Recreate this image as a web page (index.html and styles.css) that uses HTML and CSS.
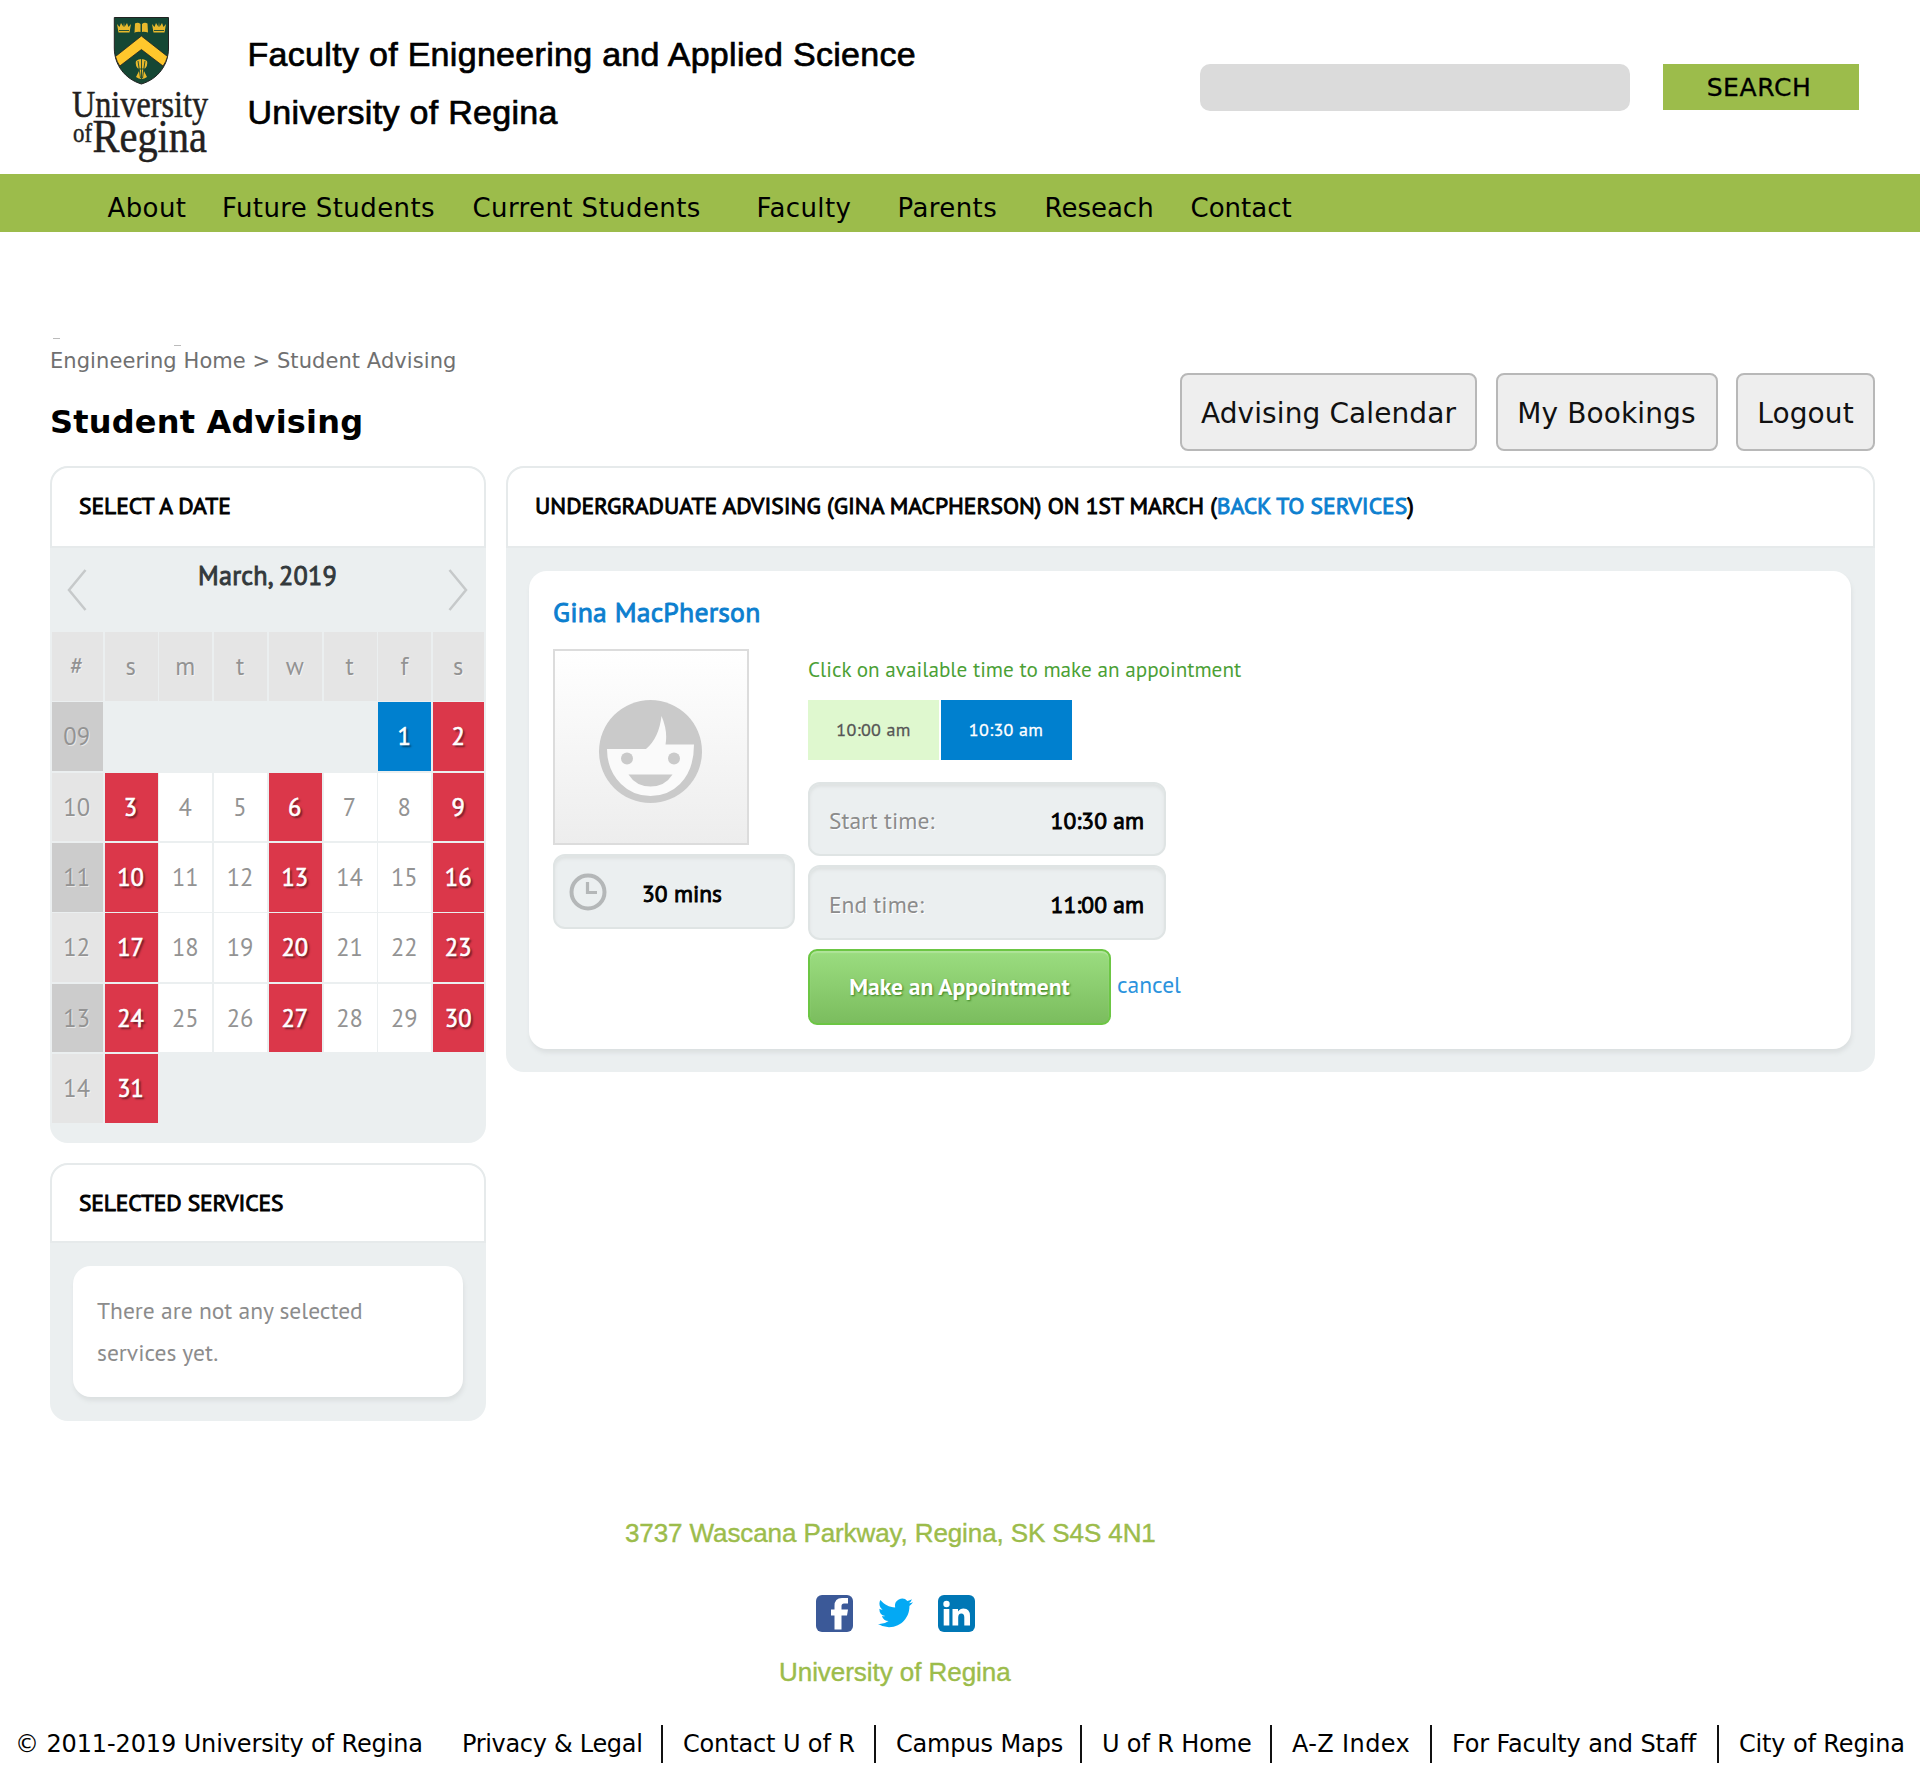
FILE: index.html
```html
<!DOCTYPE html>
<html lang="en">
<head>
<meta charset="utf-8">
<title>Student Advising - University of Regina</title>
<link rel="stylesheet" href="styles.css">
</head>
<body>
<header class="masthead">
  <svg class="logo" viewBox="70 10 144 154" width="144" height="154">
    <path d="M114.300 17.500H168.500V48C168.500 65 158 79 141.400 84C125 79 114.300 65 114.300 48Z" fill="#154734" stroke="#222" stroke-width="1"/>
    <path d="M141.400 36L167.500 56.500Q166 62 163 66L141.400 49.500L119.800 66Q117 62 115.500 56.500Z" fill="#ffc72c" stroke="#222" stroke-width=".8"/>
    <g fill="#e8b92c">
      <path d="M117 24L119.500 27L121 23L123.500 27L124 22L124.500 27L127 23L128.500 27L131 24L129.500 32.500H118.500Z"/>
      <path d="M152 24L154.500 27L156 23L158.500 27L159 22L159.500 27L162 23L163.500 27L166 24L164.500 32.500H153.500Z"/>
      <path d="M135 23.500Q138 22 140.500 24V32Q138 31 134.500 33ZM147.500 23.500Q144.500 22 142 24V32Q144.500 31 148 33Z"/>
      <path d="M136 61Q141 57 147 61Q148.500 66 143.500 70L147 77Q141.500 81 136 77L139.500 70Q134.500 66 136 61Z"/>
    </g>
    <path d="M119 30.500H129M154 30.500H164M134.500 33Q138 32 141.200 33.500Q145 32 148 33M138 61L140.500 78M141.500 59V79M145 61L142.500 78M137.500 69H145.500" fill="none" stroke="#154734" stroke-width=".9"/>
    <g class="logo-text">
      <text x="72" y="117" font-size="37.500" textLength="136" lengthAdjust="spacingAndGlyphs">University</text>
      <text x="73" y="141.500" font-size="28" textLength="19" lengthAdjust="spacingAndGlyphs">of</text>
      <text x="92.500" y="152.300" font-size="46" textLength="114.500" lengthAdjust="spacingAndGlyphs">Regina</text>
    </g>
  </svg>
  <div class="site-title">
    <div>Faculty of Enigneering and Applied Science</div>
    <div>University of Regina</div>
  </div>
  <div class="search">
    <div class="search-box"></div>
    <div class="search-btn">SEARCH</div>
  </div>
</header>
<nav class="main-nav">
  <a>About</a><a>Future Students</a><a>Current Students</a><a>Faculty</a><a>Parents</a><a class="tight">Reseach</a><a class="tight">Contact</a>
</nav>
<main>
  <div class="page-head">
    <div class="heading">
      <div class="marks"><i></i><i></i></div>
      <div class="crumbs">Engineering Home &gt; Student Advising</div>
      <h1>Student Advising</h1>
    </div>
    <div class="actions">
      <a class="to-calendar">Advising Calendar</a>
      <a class="to-bookings">My Bookings</a>
      <a class="logout">Logout</a>
    </div>
  </div>
  <div class="columns">
    <aside>
      <section class="panel calendar">
        <h2>SELECT A DATE</h2>
        <div class="month">
          <svg width="20" height="44" viewBox="0 0 20 44"><path d="M18.500 2L2 22L18.500 42"/></svg>
          <strong>March, 2019</strong>
          <svg width="20" height="44" viewBox="0 0 20 44"><path d="M1.500 2L18 22L1.500 42"/></svg>
        </div>
        <div class="grid">
          <b>#</b><b>s</b><b>m</b><b>t</b><b>w</b><b>t</b><b>f</b><b>s</b>
          <b class="dk">09</b><i></i><i></i><i></i><i></i><i></i><b class="on">1</b><b class="no">2</b>
          <b>10</b><b class="no">3</b><b class="d">4</b><b class="d">5</b><b class="no">6</b><b class="d">7</b><b class="d">8</b><b class="no">9</b>
          <b class="dk">11</b><b class="no">10</b><b class="d">11</b><b class="d">12</b><b class="no">13</b><b class="d">14</b><b class="d">15</b><b class="no">16</b>
          <b>12</b><b class="no">17</b><b class="d">18</b><b class="d">19</b><b class="no">20</b><b class="d">21</b><b class="d">22</b><b class="no">23</b>
          <b class="dk">13</b><b class="no">24</b><b class="d">25</b><b class="d">26</b><b class="no">27</b><b class="d">28</b><b class="d">29</b><b class="no">30</b>
          <b>14</b><b class="no">31</b>
        </div>
      </section>
      <section class="panel services">
        <h2>SELECTED SERVICES</h2>
        <div class="card">There are not any selected<br>services yet.</div>
      </section>
    </aside>
    <section class="panel booking">
      <h2>UNDERGRADUATE ADVISING (GINA MACPHERSON) ON 1ST MARCH (<a>BACK TO SERVICES</a>)</h2>
      <div class="card">
        <h3>Gina MacPherson</h3>
        <div class="detail">
          <div class="person">
            <svg class="avatar" width="196" height="196" viewBox="0 0 196 196">
              <defs><linearGradient id="bg" x1="0" y1="0" x2="0" y2="1"><stop offset="0" stop-color="#fff"/><stop offset="1" stop-color="#ededed"/></linearGradient></defs>
              <rect x="1" y="1" width="194" height="194" fill="url(#bg)" stroke="#dcdcdc" stroke-width="2"/>
              <circle cx="97.500" cy="102.500" r="51.500" fill="#cacaca"/>
              <path d="M54 100H93Q106 89 108.500 67Q115 82 112.500 95.500H141Q141 121 127 135Q115 147 97.500 147Q80 147 68 135Q54 121 54 100Z" fill="#fafafa"/>
              <circle cx="74" cy="109.500" r="6" fill="#cacaca"/><circle cx="121" cy="109.500" r="6" fill="#cacaca"/>
              <path d="M75.500 125.500H119.500Q112 137.500 97.500 137.500Q83 137.500 75.500 125.500Z" fill="#cacaca"/>
            </svg>
            <div class="field duration">
              <svg width="38" height="38" viewBox="0 0 38 38" fill="none" stroke="#b4b7b8"><circle cx="19" cy="19" r="16.500" stroke-width="4"/><path d="M18.500 9V19.500H28" stroke-width="3.200"/></svg>
              <strong>30 mins</strong>
            </div>
          </div>
          <div class="times">
            <p>Click on available time to make an appointment</p>
            <div class="slots"><div>10:00 am</div><div class="picked">10:30 am</div></div>
            <div class="field start">Start time:<strong>10:30 am</strong></div>
            <div class="field end">End time:<strong>11:00 am</strong></div>
            <div class="submit"><div class="make">Make an Appointment</div><a>cancel</a></div>
          </div>
        </div>
      </div>
    </section>
  </div>
</main>
<footer>
  <div class="address">3737 Wascana Parkway, Regina, SK S4S 4N1</div>
  <div class="social">
    <svg width="37" height="37" viewBox="0 0 37 37"><rect width="37" height="37" rx="6" fill="#3b5998"/><path d="M18.500 34.500V20.500H15V14.500H18.500V11Q18.500 3 26 3H32V8.500H28Q25.500 8.500 25.500 11V14.500H32L31 20.500H25.500V34.500Z" fill="#fff"/></svg>
    <svg width="35" height="36" viewBox="0 0 24 24"><path fill="#03a9f4" d="M23.953 4.570a10 10 0 01-2.825.775 4.958 4.958 0 002.163-2.723c-.951.555-2.005.959-3.127 1.184a4.920 4.920 0 00-8.384 4.482C7.690 8.095 4.067 6.130 1.640 3.162a4.822 4.822 0 00-.666 2.475c0 1.710.87 3.213 2.188 4.096a4.904 4.904 0 01-2.228-.616v.060a4.923 4.923 0 003.946 4.827 4.996 4.996 0 01-2.212.085 4.936 4.936 0 004.604 3.417 9.867 9.867 0 01-6.102 2.105c-.390 0-.779-.023-1.170-.067a13.995 13.995 0 007.557 2.209c9.053 0 13.998-7.496 13.998-13.985 0-.210 0-.420-.015-.630A9.935 9.935 0 0024 4.590z"/></svg>
    <svg width="37" height="37" viewBox="0 0 37 37"><rect width="37" height="37" rx="6" fill="#0077b5"/><g fill="#fff"><circle cx="8.500" cy="9" r="3.200"/><rect x="5.700" y="14" width="5.600" height="16.500"/><path d="M14.500 14H20V16.500Q22 13.500 25.500 13.500Q32 13.500 32 21V30.500H26.300V22.500Q26.300 18.500 23.300 18.500Q20.200 18.500 20.200 22.500V30.500H14.500Z"/></g></svg>
  </div>
  <div class="uni">University of Regina</div>
  <div class="legal">
    <div class="copyright">© 2011-2019 University of Regina</div>
    <ul><li>Privacy &amp; Legal</li><li>Contact U of R</li><li>Campus Maps</li><li>U of R Home</li><li class="wide">A-Z Index</li><li>For Faculty and Staff</li><li>City of Regina</li></ul>
  </div>
</footer>
</body>
</html>
```
FILE: styles.css
```css
* { box-sizing: border-box; }
body { margin: 0; width: 1920px; height: 1772px; overflow: hidden; background: #fff; color: #000; font-family: "DejaVu Sans", Verdana, sans-serif; white-space: nowrap; }
h1, h2, h3, p, ul { margin: 0; padding: 0; }

.masthead { display: flex; height: 174px; padding: 10px 61px 0 70px; }
.logo { flex: none; overflow: visible; }
.logo-text { font-family: "Liberation Serif", serif; fill: #231f20; stroke: #231f20; stroke-width: .5; }
.site-title { margin: 15px auto 0 33.500px; font: 34px/58px "Liberation Sans", Arial, sans-serif; letter-spacing: .3px; -webkit-text-stroke: .7px #000; }
.search { display: flex; gap: 33px; margin-top: 54px; }
.search-box { width: 430px; height: 47px; border-radius: 10px; background: #dbdbdb; }
.search-btn { width: 196px; height: 46px; padding: 1px 4px 0 0; background: #9cbc4b; font-size: 25px; line-height: 46px; letter-spacing: .6px; text-align: center; -webkit-text-stroke: .3px; }

.main-nav { display: grid; grid-template-columns: 114.500px 250.500px 284px 141px 147px 146px 1fr; height: 58px; padding: 10px 0 0 107.500px; background: #9cbc4b; font-size: 26px; line-height: 48px; letter-spacing: .4px; }
.main-nav .tight { letter-spacing: 0; }

main { width: 1825px; margin-left: 50px; }
.page-head { display: flex; justify-content: space-between; align-items: flex-end; height: 234px; }
.marks { display: flex; justify-content: space-between; width: 131px; height: 12px; padding-left: 3px; }
.marks i { width: 7px; height: 1px; margin-top: 1px; background: #bbb; }
.marks i + i { margin-top: 8px; }
.crumbs { font-size: 21px; line-height: 24px; letter-spacing: .07px; color: #707070; }
h1 { margin: 29px 0 24px; font-size: 32px; line-height: 40px; letter-spacing: .2px; }
.actions { display: flex; gap: 18.500px; margin-bottom: 15px; font-size: 28px; line-height: 77px; letter-spacing: .1px; color: #111; }
.actions a { height: 78px; border: 2px solid #b8b8b8; border-radius: 8px; background: #eee; text-align: center; }
.to-calendar { width: 297px; }
.to-bookings { width: 222px; }
.logout { width: 139px; }

.columns { display: flex; align-items: flex-start; gap: 20px; font-family: "PT Sans", "Noto Sans", sans-serif; font-size: 23.500px; }
aside { width: 436px; }
.panel { border-radius: 18px; background: #ebeff0; overflow: hidden; }
.panel h2 { height: 81.500px; padding-left: 27px; border: 2px solid #e6eaeb; border-radius: 18px 18px 0 0; background: #fff; font-size: 23.500px; font-weight: 400; line-height: 75px; -webkit-text-stroke: .9px; }
.services h2 { height: 80px; letter-spacing: -.13px; }
.panel h2 a, h3 { color: #0c7fcf; }
.calendar { height: 677px; }
.month { display: flex; justify-content: space-between; align-items: flex-start; height: 84.500px; padding: 20px 18px 0 17px; color: #33393c; font-size: 26.200px; line-height: 30px; }
.month svg { fill: none; stroke: #c6c9ca; stroke-width: 2.500; }
.month strong { margin-top: -8px; font-weight: 400; letter-spacing: .2px; -webkit-text-stroke: .9px; }
.grid { display: grid; grid-template-columns: 51.300px repeat(6, 53px) 51.300px; grid-auto-rows: 68.600px; gap: 1.750px; padding-left: 1.500px; font-size: 24.500px; line-height: 68.500px; text-align: center; color: #939393; }
.grid b { padding-right: 1px; background: #e5e5e5; font-weight: 400; text-shadow: 1px 1px #fff8; }
.grid .dk { background: #ccc; }
.grid .d { background: #fff; }
.grid .on, .grid .no { color: #fff; text-shadow: 2px 2px 2px #0008; -webkit-text-stroke: .6px; }
.grid .on { background: #0080cf; }
.grid .no { background: #db374a; }
.services { height: 258px; margin-top: 20px; }
.card { border-radius: 18px; background: #fff; box-shadow: 1px 4px 4px #dce0e1; }
.services .card { height: 131px; margin: 23px; padding: 23px 24px; line-height: 42px; color: #8c8c8c; }

.booking { width: 1369px; height: 606px; }
.booking .card { width: 1322px; height: 478px; margin: 23.500px 23px; padding: 21px 24px; }
h3 { font-size: 27.700px; font-weight: 400; line-height: 40px; letter-spacing: .2px; -webkit-text-stroke: .9px; }
.detail { display: flex; padding-top: 17px; }
.person { width: 255px; }
.avatar { display: block; }
.field { display: flex; align-items: center; border: 2px solid #dfe4e4; border-radius: 12px; background: #ebeff0; box-shadow: inset 0 3px 3px #dfe3e3; text-shadow: 1px 1px #fff; color: #8c8c8c; }
.field strong { color: #000; font-weight: 400; -webkit-text-stroke: .9px; }
.duration { width: 242px; height: 75px; margin-top: 9px; padding: 0 14px; gap: 35px; }
.duration strong { padding-top: 3px; }
.times p { padding-top: 6px; font-size: 21.200px; line-height: 28px; color: #4ba035; }
.slots { display: flex; gap: 1.500px; margin-top: 17px; font-size: 18px; line-height: 60px; letter-spacing: .35px; text-align: center; color: #555; -webkit-text-stroke: .3px; }
.slots div { width: 131px; height: 60px; background: #dff8cf; }
.slots .picked { background: #0080cf; color: #fff; }
.start, .end { justify-content: space-between; width: 358px; height: 74px; margin-top: 22px; padding: 2px 20px 0 19px; }
.end { height: 75px; margin-top: 9px; }
.submit { display: flex; gap: 6px; margin-top: 9px; line-height: 70px; color: #2b93dd; }
.make { width: 303px; height: 76px; border: 2px solid #6cc644; border-radius: 9px; background: linear-gradient(#9bdd80, #7bbd5e); box-shadow: inset 0 2px 1px #b0e49a; color: #fff; font-weight: 700; text-align: center; text-shadow: 1px 1px 2px #3c8020; }

footer { width: 1920px; }
.address, .uni { color: #9cbc4b; font: 26px/32px "Liberation Sans", Arial, sans-serif; -webkit-text-stroke: .4px #9cbc4b; }
.address { padding: 96px 0 0 625px; letter-spacing: -.1px; }
.social { display: flex; gap: 25px; padding: 46px 0 0 816px; }
.uni { padding: 24px 0 0 779px; letter-spacing: -.05px; }
.legal { display: flex; margin-top: 37px; padding-left: 15px; font-size: 24px; line-height: 38px; letter-spacing: -.12px; }
.legal ul { display: grid; grid-template-columns: 200px 213px 206px 190px 160px 287px 1fr; margin-left: 38px; list-style: none; }
.legal li:first-child { letter-spacing: -.3px; padding-left: 1px; }
.legal .wide { letter-spacing: .4px; }
.legal li + li { padding-left: 20px; border-left: 2px solid #111; }
```
